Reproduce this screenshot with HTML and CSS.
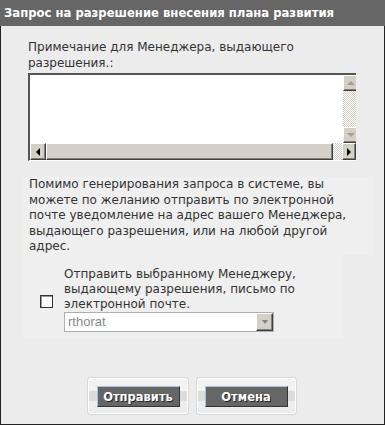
FILE: index.html
```html
<!DOCTYPE html>
<html lang="ru">
<head>
    <meta charset="UTF-8">
    <title>Запрос на разрешение внесения плана развития</title>
    <link rel="stylesheet" href="styles.css">
</head>
<body>
    <div class="dialog">
        <div class="title">Запрос на разрешение внесения плана развития</div>

        <div class="content">
            <div class="memo-label">Примечание для Менеджера, выдающего разрешения.:</div>

            <div class="memo">
                <div class="memo-body">
                    <div class="memo-text"></div>
                    <div class="vscroll">
                        <div class="sb-btn"><span class="arrow up"></span></div>
                        <div class="sb-track"></div>
                        <div class="sb-btn"><span class="arrow down"></span></div>
                    </div>
                </div>
                <div class="hscroll">
                    <div class="sb-btn"><span class="arrow left"></span></div>
                    <div class="sb-thumb"></div>
                    <div class="sb-track"></div>
                    <div class="sb-btn"><span class="arrow right"></span></div>
                </div>
            </div>

            <div class="note">
                Помимо генерирования запроса в системе, вы можете по желанию отправить по электронной почте уведомление на адрес вашего Менеджера, выдающего разрешения, или на любой другой адрес.
            </div>

            <div class="notify">
                <div class="check-col"><span class="checkbox"></span></div>
                <div class="notify-main">
                    <div class="notify-label">Отправить выбранному Менеджеру, выдающему разрешения, письмо по электронной почте.</div>
                    <div class="select">
                        <span class="select-value">rthorat</span>
                        <span class="select-btn"><span class="arrow down"></span></span>
                    </div>
                </div>
            </div>
        </div>

        <div class="actions">
            <div class="btn-frame"><button class="btn">Отправить</button></div>
            <div class="btn-frame"><button class="btn">Отмена</button></div>
        </div>
    </div>
</body>
</html>
```

FILE: styles.css
```css
* {
    margin: 0;
    padding: 0;
    box-sizing: border-box;
}

body {
    font-family: 'DejaVu Sans', Verdana, sans-serif;
    font-size: 12px;
    color: #333;
    background: #ececec;
}

.dialog {
    width: 385px;
    height: 425px;
    border: 1px solid #222;
    background: #ececec;
    display: flex;
    flex-direction: column;
}

.title {
    height: 26px;
    line-height: 26px;
    margin: -1px -1px 0 -1px;
    padding-left: 4px;
    background: #666;
    color: #fff;
    font-weight: bold;
    font-size: 11.65px;
    white-space: nowrap;
    overflow: hidden;
}

.content {
    padding: 13px 11px 0 22px;
}

/* memo field */
.memo-label {
    padding-left: 5px;
    line-height: 16px;
    width: 300px;
}

.memo {
    margin: 2px 0 0 5px;
    width: 328px;
    height: 88px;
    overflow: hidden;
    border-top: 2px solid #555;
    border-left: 2px solid #555;
    border-bottom: 1px solid #fff;
    background: #fff;
    display: flex;
    flex-direction: column;
}

.memo-body {
    flex: 1;
    display: flex;
    min-height: 0;
}

.memo-text {
    flex: 1;
}

.vscroll {
    width: 16px;
    flex: none;
    display: flex;
    flex-direction: column;
    margin-right: -3px;
}

.vscroll .sb-track {
    flex: 1;
}

.hscroll {
    height: 17px;
    flex: none;
    display: flex;
}

.sb-btn {
    width: 16px;
    height: 16px;
    flex: none;
    background: #d4d0c8;
    border-top: 1px solid #fff;
    border-left: 1px solid #fff;
    border-right: 1px solid #404040;
    border-bottom: 1px solid #404040;
    box-shadow: inset -1px -1px 0 #808080;
    display: flex;
    align-items: center;
    justify-content: center;
}

.hscroll .sb-btn {
    height: 17px;
}

.hscroll .sb-btn:last-child {
    width: 14px;
}

.sb-thumb {
    width: 287px;
    background: #d4d0c8;
    border-top: 1px solid #fff;
    border-left: 1px solid #fff;
    border-right: 1px solid #404040;
    border-bottom: 1px solid #404040;
    box-shadow: inset -1px -1px 0 #808080;
}

.sb-track {
    flex: 1;
    background: repeating-conic-gradient(#fff 0 25%, #d4d0c8 0 50%) 0 0 / 2px 2px;
}

.arrow {
    width: 0;
    height: 0;
    border: 4px solid transparent;
}

.arrow.up {
    border-bottom-color: #a0a0a0;
    border-top-width: 0;
}

.arrow.down {
    border-top-color: #a0a0a0;
    border-bottom-width: 0;
}

.arrow.left {
    border-right-color: #000;
    border-left-width: 0;
}

.arrow.right {
    border-left-color: #000;
    border-right-width: 0;
}

/* info text */
.note {
    margin-top: 16px;
    padding: 0 4px 0 6px;
    background: #efefef;
    line-height: 15.5px;
}

/* e-mail option */
.notify {
    display: flex;
    align-items: center;
    width: 320px;
    padding: 12px 0 6px;
    background: #efefef;
}

.check-col {
    width: 41px;
    flex: none;
    padding-left: 17px;
    padding-top: 4px;
}

.checkbox {
    display: block;
    width: 13px;
    height: 13px;
    border: 1px solid #333;
    box-shadow: inset 1px 1px 0 #999;
    background: #fff;
}

.notify-label {
    line-height: 15.3px;
}

.select {
    display: flex;
    width: 210px;
    height: 20px;
    border: 1px solid #b0b0b0;
    background: #fff;
}

.select-value {
    flex: 1;
    padding-left: 3px;
    font-family: 'Liberation Sans', Arial, sans-serif;
    font-size: 13px;
    line-height: 18px;
    color: #8a8a8a;
}

.select-btn {
    width: 17px;
    background: #d4d0c8;
    border-top: 1px solid #fff;
    border-left: 1px solid #fff;
    border-right: 1px solid #404040;
    border-bottom: 1px solid #404040;
    box-shadow: inset -1px -1px 0 #808080;
    display: flex;
    align-items: center;
    justify-content: center;
}

.select-btn .arrow {
    border-width: 4px 3.5px 0;
    border-top-color: #808080;
}

/* buttons */
.actions {
    display: flex;
    justify-content: center;
    gap: 9px;
    margin-top: auto;
    margin-bottom: 10px;
    padding-right: 2px;
}

.btn-frame {
    padding: 7px 7px 6px 8px;
    border: 1px solid #fff;
    border-radius: 3px;
    box-shadow: 0 0 0 1px #d8d8d8;
    background: linear-gradient(#f2f2f2 0, #f2f2f2 35%, #dcdcdc 35%, #dcdcdc 65%, #ededed 65%);
}

.btn-frame + .btn-frame {
    padding-left: 7px;
}

.btn {
    width: 83px;
    height: 21px;
    background: #666;
    border-top: 1px solid #a9c4de;
    border-left: 1px solid #a9c4de;
    border-right: 1px solid #333;
    border-bottom: 1px solid #333;
    color: #fff;
    font-family: 'DejaVu Sans', Verdana, sans-serif;
    font-size: 11.5px;
    font-weight: bold;
    text-shadow: 1px 1px 0 #222;
}
```
